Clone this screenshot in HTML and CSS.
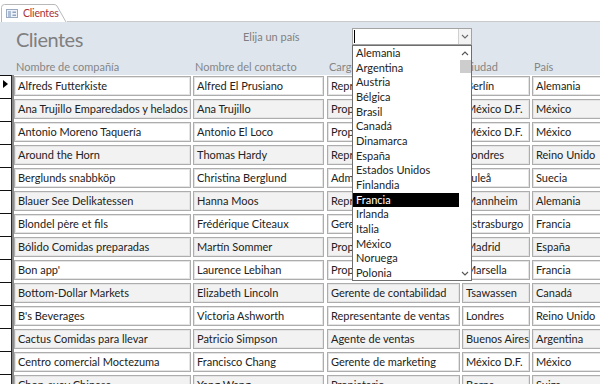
FILE: index.html
```html
<!DOCTYPE html>
<html>
<head>
    <meta charset="utf-8">
    <title>Clientes</title>
    <link rel="stylesheet" href="styles.css">
</head>
<body>
<div class="tabs">
    <div class="tab">
        <svg class="tab-shape" width="66" height="18" viewBox="0 0 66 18">
            <path d="M0.5 18 V3.5 Q0.5 0.5 3.5 0.5 H53 Q55 0.5 56 2 L65 18" fill="#fff" stroke="#b9b9b9"/>
        </svg>
        <svg class="tab-icon" width="12" height="9" viewBox="0 0 12 9">
            <rect x="0.5" y="0.5" width="11" height="8" fill="#eef2f8" stroke="#9aaac0"/>
            <path d="M2 3h3M2 5h3M2 7h3" stroke="#6d8ab3"/>
            <rect x="6.5" y="2.5" width="3.5" height="1.5" fill="#8ea3c2"/>
            <rect x="6.5" y="5.5" width="3.5" height="1.5" fill="#8ea3c2"/>
        </svg>
        <span class="tab-label">Clientes</span>
    </div>
</div>

<div class="header">
    <div class="title-row">
        <h1 class="title">Clientes</h1>
        <span class="pick-label">Elija un país</span>
        <div class="combo">
            <div class="combo-input"><span class="caret"></span></div>
            <div class="combo-btn">
                <svg width="8" height="5" viewBox="0 0 8 5"><polyline points="1,1 4,4 7,1" fill="none" stroke="#6a6a6a" stroke-width="1.1"/></svg>
            </div>
            <div class="combo-list">
                <div class="items">
                    <div class="item">Alemania</div>
                    <div class="item">Argentina</div>
                    <div class="item">Austria</div>
                    <div class="item">Bélgica</div>
                    <div class="item">Brasil</div>
                    <div class="item">Canadá</div>
                    <div class="item">Dinamarca</div>
                    <div class="item">España</div>
                    <div class="item">Estados Unidos</div>
                    <div class="item">Finlandia</div>
                    <div class="item selected">Francia</div>
                    <div class="item">Irlanda</div>
                    <div class="item">Italia</div>
                    <div class="item">México</div>
                    <div class="item">Noruega</div>
                    <div class="item">Polonia</div>
                </div>
                <div class="scroll">
                    <svg class="arrow" width="8" height="5" viewBox="0 0 8 5"><polyline points="1,4 4,1 7,4" fill="none" stroke="#555" stroke-width="1.1"/></svg>
                    <div class="thumb"></div>
                    <div class="track"></div>
                    <svg class="arrow" width="8" height="5" viewBox="0 0 8 5"><polyline points="1,1 4,4 7,1" fill="none" stroke="#555" stroke-width="1.1"/></svg>
                </div>
            </div>
        </div>
    </div>
    <div class="col-labels">
        <span class="sel-space"></span>
        <span class="lbl c-company">Nombre de compañía</span>
        <span class="lbl c-contact">Nombre del contacto</span>
        <span class="lbl c-cargo">Cargo</span>
        <span class="lbl c-city">Ciudad</span>
        <span class="lbl c-country">País</span>
    </div>
</div>

<div class="rows">
    <div class="row">
        <div class="sel"><span class="current"></span></div>
        <div class="cell c-company">Alfreds Futterkiste</div>
        <div class="cell c-contact">Alfred El Prusiano</div>
        <div class="cell c-cargo">Representante de ventas</div>
        <div class="cell c-city">Berlín</div>
        <div class="cell c-country">Alemania</div>
    </div>
    <div class="row">
        <div class="sel"></div>
        <div class="cell c-company">Ana Trujillo Emparedados y helados</div>
        <div class="cell c-contact">Ana Trujillo</div>
        <div class="cell c-cargo">Propietario</div>
        <div class="cell c-city">México D.F.</div>
        <div class="cell c-country">México</div>
    </div>
    <div class="row">
        <div class="sel"></div>
        <div class="cell c-company">Antonio Moreno Taquería</div>
        <div class="cell c-contact">Antonio El Loco</div>
        <div class="cell c-cargo">Propietario</div>
        <div class="cell c-city">México D.F.</div>
        <div class="cell c-country">México</div>
    </div>
    <div class="row">
        <div class="sel"></div>
        <div class="cell c-company">Around the Horn</div>
        <div class="cell c-contact">Thomas Hardy</div>
        <div class="cell c-cargo">Representante de ventas</div>
        <div class="cell c-city">Londres</div>
        <div class="cell c-country">Reino Unido</div>
    </div>
    <div class="row">
        <div class="sel"></div>
        <div class="cell c-company">Berglunds snabbköp</div>
        <div class="cell c-contact">Christina Berglund</div>
        <div class="cell c-cargo">Administrador de pedidos</div>
        <div class="cell c-city">Luleå</div>
        <div class="cell c-country">Suecia</div>
    </div>
    <div class="row">
        <div class="sel"></div>
        <div class="cell c-company">Blauer See Delikatessen</div>
        <div class="cell c-contact">Hanna Moos</div>
        <div class="cell c-cargo">Representante de ventas</div>
        <div class="cell c-city">Mannheim</div>
        <div class="cell c-country">Alemania</div>
    </div>
    <div class="row">
        <div class="sel"></div>
        <div class="cell c-company">Blondel père et fils</div>
        <div class="cell c-contact">Frédérique Citeaux</div>
        <div class="cell c-cargo">Gerente de marketing</div>
        <div class="cell c-city">Estrasburgo</div>
        <div class="cell c-country">Francia</div>
    </div>
    <div class="row">
        <div class="sel"></div>
        <div class="cell c-company">Bólido Comidas preparadas</div>
        <div class="cell c-contact">Martín Sommer</div>
        <div class="cell c-cargo">Propietario</div>
        <div class="cell c-city">Madrid</div>
        <div class="cell c-country">España</div>
    </div>
    <div class="row">
        <div class="sel"></div>
        <div class="cell c-company">Bon app'</div>
        <div class="cell c-contact">Laurence Lebihan</div>
        <div class="cell c-cargo">Propietario</div>
        <div class="cell c-city">Marsella</div>
        <div class="cell c-country">Francia</div>
    </div>
    <div class="row">
        <div class="sel"></div>
        <div class="cell c-company">Bottom-Dollar Markets</div>
        <div class="cell c-contact">Elizabeth Lincoln</div>
        <div class="cell c-cargo">Gerente de contabilidad</div>
        <div class="cell c-city">Tsawassen</div>
        <div class="cell c-country">Canadá</div>
    </div>
    <div class="row">
        <div class="sel"></div>
        <div class="cell c-company">B's Beverages</div>
        <div class="cell c-contact">Victoria Ashworth</div>
        <div class="cell c-cargo">Representante de ventas</div>
        <div class="cell c-city">Londres</div>
        <div class="cell c-country">Reino Unido</div>
    </div>
    <div class="row">
        <div class="sel"></div>
        <div class="cell c-company">Cactus Comidas para llevar</div>
        <div class="cell c-contact">Patricio Simpson</div>
        <div class="cell c-cargo">Agente de ventas</div>
        <div class="cell c-city">Buenos Aires</div>
        <div class="cell c-country">Argentina</div>
    </div>
    <div class="row">
        <div class="sel"></div>
        <div class="cell c-company">Centro comercial Moctezuma</div>
        <div class="cell c-contact">Francisco Chang</div>
        <div class="cell c-cargo">Gerente de marketing</div>
        <div class="cell c-city">México D.F.</div>
        <div class="cell c-country">México</div>
    </div>
    <div class="row">
        <div class="sel"></div>
        <div class="cell c-company">Chop-suey Chinese</div>
        <div class="cell c-contact">Yang Wang</div>
        <div class="cell c-cargo">Propietario</div>
        <div class="cell c-city">Berna</div>
        <div class="cell c-country">Suiza</div>
    </div>
</div>
</body>
</html>
```

FILE: styles.css
```css
* {
    box-sizing: border-box;
}

html, body {
    margin: 0;
    padding: 0;
}

body {
    width: 600px;
    height: 384px;
    overflow: hidden;
    background: #fff;
    color: #222;
    font-family: Lato, "Open Sans", sans-serif;
    font-size: 11px;
}

/* tab strip */
.tabs {
    display: flex;
    align-items: flex-end;
    height: 22px;
    padding-top: 4px;
}

.tabs::after {
    content: "";
    flex: 1;
    align-self: stretch;
    border-bottom: 1px solid #c9c9c9;
}

.tab {
    position: relative;
    flex-shrink: 0;
    display: flex;
    align-items: center;
    width: 66px;
    height: 18px;
    margin-left: 1px;
    padding-left: 5px;
    gap: 5px;
}

.tab-shape {
    position: absolute;
    left: 0;
    top: 0;
}

.tab-icon,
.tab-label {
    position: relative;
}

.tab-label {
    color: #a83236;
    font-size: 10.5px;
    letter-spacing: -0.2px;
}

/* header */
.header {
    height: 53px;
    background: #dfe5ed;
}

.title-row {
    display: flex;
    align-items: flex-start;
    height: 36px;
    padding-left: 16px;
}

.title {
    flex-shrink: 0;
    width: 227px;
    margin: 0;
    padding-top: 5px;
    font-size: 20px;
    line-height: 24px;
    font-weight: normal;
    letter-spacing: -0.5px;
    color: #7f7f7f;
}

.pick-label {
    flex-shrink: 0;
    width: 109px;
    margin-top: 6px;
    line-height: 17px;
    color: #7f7f7f;
}

.combo {
    position: relative;
    flex-shrink: 0;
    display: flex;
    width: 120px;
    height: 17px;
    margin-top: 6px;
    border: 1px solid #a3a3a3;
    background: #fff;
}

.combo-input {
    flex: 1;
    padding: 1px 0 0 1px;
}

.caret {
    display: block;
    width: 1px;
    height: 13px;
    background: #000;
}

.combo-btn {
    display: flex;
    align-items: center;
    justify-content: center;
    width: 13px;
    border-left: 1px solid #d0d0d0;
    background: #f3f3f3;
}

.combo-list {
    position: absolute;
    top: 16px;
    left: -1px;
    display: flex;
    width: 120px;
    height: 236px;
    border: 1px solid #6e6e6e;
    background: #fff;
    z-index: 5;
}

.items {
    flex: 1;
}

.item {
    height: 14.67px;
    line-height: 14.67px;
    padding-left: 3px;
    font-size: 11px;
    color: #222;
    white-space: nowrap;
}

.item.selected {
    background: #000;
    color: #fff;
}

.scroll {
    display: flex;
    flex-direction: column;
    align-items: center;
    width: 12px;
    padding: 5px 0 4px;
}

.thumb {
    width: 11px;
    height: 13px;
    margin-top: 4px;
    background: #cdcdcd;
}

.track {
    flex: 1;
}

/* column labels */
.col-labels {
    display: flex;
    height: 17px;
    padding-top: 2px;
    line-height: 13px;
    color: #858585;
}

.sel-space {
    flex-shrink: 0;
    width: 12px;
}

.lbl {
    flex-shrink: 0;
    padding-left: 2px;
    white-space: nowrap;
}

/* record rows */
.row {
    display: flex;
    height: 23px;
}

.sel {
    position: relative;
    flex-shrink: 0;
    width: 12px;
    border-top: 1px solid #111;
    border-right: 1px solid #2a2a2a;
    box-shadow: 2px 0 0 #8a8a8a;
}

.current {
    position: absolute;
    left: 3px;
    top: 4px;
    border-left: 5px solid #000;
    border-top: 4px solid transparent;
    border-bottom: 4px solid transparent;
}

.cell {
    flex-shrink: 0;
    height: 20px;
    margin-top: 1px;
    padding: 0 3px;
    border: 1px solid #adadad;
    box-shadow: inset 0 0 0 1px #e4e4e4;
    line-height: 18px;
    white-space: nowrap;
    overflow: hidden;
    background: #fff;
}

.row:nth-child(even) .cell {
    background: #f2f2f2;
}

.c-company { width: 177px; margin-left: 2px; }
.c-contact { width: 131px; margin-left: 2px; }
.c-cargo { width: 133px; margin-left: 3px; }
.c-city { width: 68px; margin-left: 2px; }
.c-country { width: 90px; margin-left: 2px; }
```
